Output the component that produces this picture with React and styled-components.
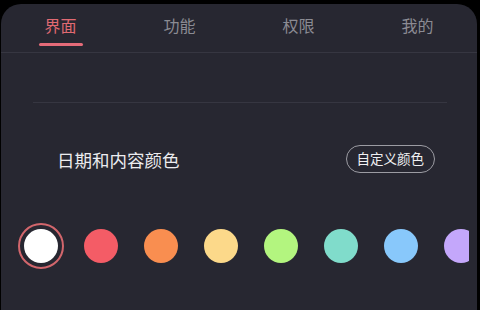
import React, { useState } from 'react';
import styled, { createGlobalStyle } from 'styled-components';

const GlobalStyle = createGlobalStyle`
	html, body {
		margin: 0;
		padding: 0;
		background: #000;
		font-family: "Noto Sans CJK SC", "Noto Sans", sans-serif;
	}
`;

const tabs = ['界面', '功能', '权限', '我的'];

const swatches = [
	'#ffffff',
	'#f45c66',
	'#f98e50',
	'#fcd98a',
	'#b3f57f',
	'#80dccb',
	'#88c8fb',
	'#c4a7fb',
];

// Panel
const Panel = styled.div`
	margin: 4px 3px 0 1px;
	height: 306px;
	background: #272731;
	border-radius: 20px 20px 0 0;
	overflow: hidden;
	display: flex;
	flex-direction: column;
`;

// Tab bar
const TabBar = styled.div`
	display: grid;
	grid-template-columns: repeat(4, 1fr);
	height: 48px;
	border-bottom: 1px solid #363641;
`;

const Tab = styled.div`
	display: flex;
	flex-direction: column;
	align-items: center;
	padding-top: 11px;
	font-size: 16px;
	line-height: 20px;
	color: ${({ $active }) => ($active ? '#e06a72' : '#8b8b93')};
	cursor: pointer;
`;

const Underline = styled.div`
	margin-top: 8px;
	width: 44px;
	height: 3px;
	border-radius: 2px;
	background: ${({ $active }) => ($active ? '#e56b79' : 'transparent')};
`;

// Content
const Divider = styled.div`
	margin: 49px 30px 0 32px;
	height: 1px;
	background: #363641;
`;

const Row = styled.div`
	display: flex;
	align-items: center;
	justify-content: space-between;
	margin-top: 42px;
	padding: 0 42px 0 56px;
`;

const Label = styled.div`
	font-size: 17.5px;
	color: #ececef;
`;

const OutlineButton = styled.button`
	height: 28px;
	padding: 0 10px;
	border: 1.5px solid #9c9ca3;
	border-radius: 14px;
	background: transparent;
	color: #f0f0f2;
	font-family: inherit;
	font-size: 13.5px;
	line-height: 1;
`;

const SwatchRow = styled.div`
	display: flex;
	gap: 14px;
	margin: 50px 8px 0 17px;
	overflow: hidden;
`;

const Swatch = styled.div`
	flex: none;
	width: 46px;
	height: 46px;
	border-radius: 50%;
	box-sizing: border-box;
	display: flex;
	align-items: center;
	justify-content: center;
	border: 2px solid ${({ $selected }) => ($selected ? '#d2666c' : 'transparent')};
	cursor: pointer;
`;

const Dot = styled.div`
	width: 34px;
	height: 34px;
	border-radius: 50%;
	background: ${({ $color }) => $color};
`;

export default function App() {
	const [active, setActive] = useState(0);
	const [selected, setSelected] = useState(0);

	return (
		<>
			<GlobalStyle />
			<Panel>
				<TabBar>
					{tabs.map((t, i) => (
						<Tab key={t} $active={i === active} onClick={() => setActive(i)}>
							{t}
							<Underline $active={i === active} />
						</Tab>
					))}
				</TabBar>
				<Divider />
				<Row>
					<Label>日期和内容颜色</Label>
					<OutlineButton>自定义颜色</OutlineButton>
				</Row>
				<SwatchRow>
					{swatches.map((c, i) => (
						<Swatch key={c} $selected={i === selected} onClick={() => setSelected(i)}>
							<Dot $color={c} />
						</Swatch>
					))}
				</SwatchRow>
			</Panel>
		</>
	);
}
